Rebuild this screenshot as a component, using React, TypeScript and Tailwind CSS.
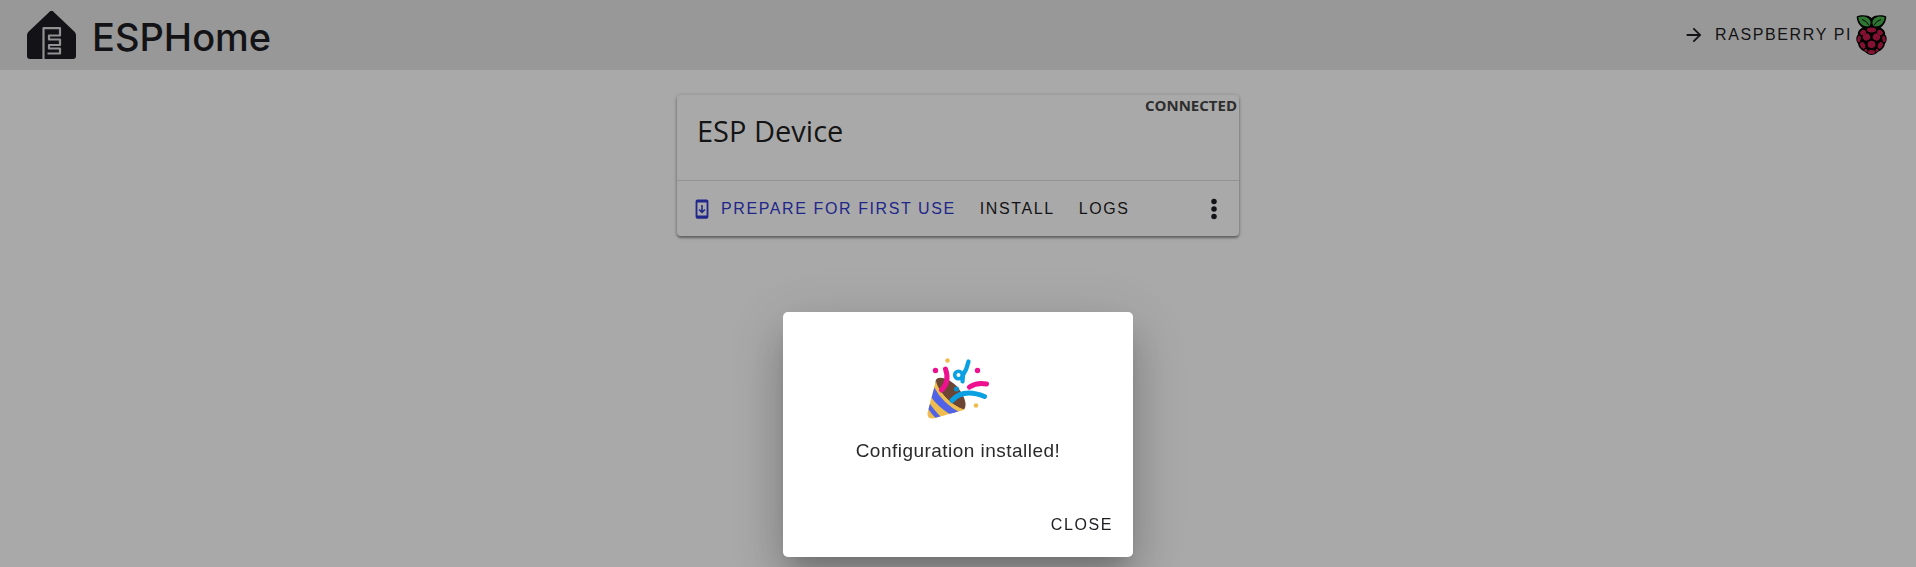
import type { ReactNode } from "react";

function EspHomeLogo() {
  return (
    <svg viewBox="0 0 49 48" className="h-12 w-[49px]" aria-hidden="true">
      <path
        d="M22.300 .9a3 3 0 0 1 4.400 0L47 20.200a5 5 0 0 1 2 3.800V45a3 3 0 0 1-3 3H3a3 3 0 0 1-3-3V24a5 5 0 0 1 2-3.800Z"
        fill="#1c1d22"
      />
      <path
        d="M16.500 48V17.200H33V24.500H22V28.500H33V34H22V37.500H33V42.500H20.500"
        fill="none"
        stroke="#d6d6d6"
        strokeWidth="2.200"
        strokeLinejoin="round"
      />
    </svg>
  );
}

function RaspberryLogo() {
  const drupelets: [number, number, number, number, number][] = [
    [15.5, 15, 4.5, 2.4, 0],
    [7, 17.5, 3, 2.5, -35],
    [24, 17.5, 3, 2.5, 35],
    [10.5, 22, 3.7, 3.5, -30],
    [20.5, 22, 3.7, 3.5, 30],
    [3, 24, 1.7, 3.3, 8],
    [28, 24, 1.7, 3.3, -8],
    [15.5, 29.3, 3.9, 3.6, 0],
    [6.7, 30.3, 2.4, 3.5, -25],
    [24.3, 30.3, 2.4, 3.5, 25],
    [15.5, 37, 3.6, 2, 0],
    [10, 35.3, 1.6, 1.3, 35],
    [21, 35.3, 1.6, 1.3, -35],
  ];
  return (
    <svg viewBox="0 0 31 40" className="h-10 w-[31px]" aria-hidden="true">
      <path
        d="M15.500 3C12-.5 4 0 .7 1.500 .8 6 3 10.500 6.500 12.500 2.500 14.500 1.500 17.500 2 19.500-.5 22 0 26.500 2 28.500 2.500 33 6 35.500 8.500 36.500 11 39 13.500 40 15.500 40S20 39 22.500 36.500C25 35.500 28.500 33 29 28.500 31 26.500 31.500 22 29 19.500 29.500 17.500 28.500 14.500 24.500 12.500 28 10.500 30.200 6 30.300 1.500 27 0 19-.5 15.500 3Z"
        fill="#000"
      />
      <path
        d="M2.200 2.300C7 .8 12.500 1.500 14.500 6.500 15 9 14 11.300 11.500 11.500 7 11.500 3 8.500 2.200 2.300ZM28.800 2.300C24 .8 18.500 1.500 16.500 6.500 16 9 17 11.300 19.500 11.500 24 11.500 28 8.500 28.800 2.300Z"
        fill="#46af4b"
      />
      <path d="M6 4.500Q11 6 12.800 10M25 4.500Q20 6 18.200 10" stroke="#000" strokeWidth=".9" fill="none" />
      {drupelets.map(([x, y, rx, ry, r]) => (
        <ellipse key={`${x}-${y}`} cx={x} cy={y} rx={rx} ry={ry} transform={`rotate(${r} ${x} ${y})`} fill="#c51a4a" />
      ))}
    </svg>
  );
}

function PartyPopper() {
  return (
    <svg viewBox="0 0 62 62" className="size-[62px]" role="img" aria-label="Party popper">
      <defs>
        <clipPath id="cone">
          <path d="M9 24C11 33 23 49 38 52.500L6 61.500Q0 62 .5 56Z" />
        </clipPath>
      </defs>
      <path d="M8.500 25C8.500 18 20 20 29 28.500 37 37 41 48 37 52.500 31 54 9 38 8.500 25Z" fill="#6d4534" />
      <g clipPath="url(#cone)">
        <rect y="20" width="42" height="42" fill="#efbd4e" />
        <g fill="none" stroke="#4f62e8" strokeWidth="4.500">
          <path d="M-1 45Q6 56 14 63" />
          <path d="M3 35Q13 50 29 58" />
          <path d="M6.500 28Q17 46 36 55.500" stroke="#efbd4e" />
          <path d="M5 31Q14 48 32 57.500" />
          <path d="M2 40Q10 54 22 61" stroke="#efbd4e" strokeWidth="3.500" />
        </g>
      </g>
      <g fill="none" strokeLinecap="round" strokeLinejoin="round" strokeWidth="5">
        <path d="M18.500 12Q23 25 14.500 33" stroke="#ee108e" />
        <path d="M42.500 30Q50 25 59.500 27" stroke="#ee108e" />
        <path d="M25 43.500Q36 31 57.500 39.500" stroke="#0aa0e2" />
        <path d="M41.500 4.500Q40 12 36 18L35.500 24.500" stroke="#0aa0e2" strokeWidth="4.200" />
        <circle cx="31.500" cy="18" r="3.800" stroke="#0aa0e2" strokeWidth="3.600" />
      </g>
      <circle cx="29.500" cy="32" r="2.600" fill="#0a8fca" />
      <g fill="#ee108e">
        <circle cx="8.500" cy="13.500" r="2.700" />
        <circle cx="50.500" cy="13.500" r="2.700" />
      </g>
      <g fill="#efbd4e">
        <circle cx="20.500" cy="3.500" r="2.300" />
        <circle cx="49" cy="48.500" r="2.300" />
      </g>
    </svg>
  );
}

function TextButton({ children, className = "" }: { children: ReactNode; className?: string }) {
  return (
    <button
      type="button"
      className={`flex h-11 items-center rounded-sm px-2.5 text-base tracking-widest whitespace-nowrap uppercase ${className}`}
    >
      {children}
    </button>
  );
}

function Header() {
  return (
    <header className="flex h-[70px] items-center justify-between bg-[#e0e0e0] pr-[29px] pl-[27px] text-[#1c1d22]">
      <a href="#" className="flex items-center gap-4">
        <EspHomeLogo />
        <span className="pt-1 font-[Inter,sans-serif] text-[38px] leading-none font-medium">ESPHome</span>
      </a>
      <a href="#raspberry-pi" className="flex items-center text-base tracking-widest uppercase">
        <svg viewBox="0 0 24 24" className="mr-2.5 size-[22px]" fill="currentColor" aria-hidden="true">
          <path d="M12 4l-1.410 1.410L16.170 11H4v2h12.170l-5.580 5.590L12 20l8-8z" />
        </svg>
        <span className="mr-1">Raspberry Pi</span>
        <RaspberryLogo />
      </a>
    </header>
  );
}

function DeviceCard() {
  return (
    <section className="relative w-[562px] rounded-sm bg-[#fafafa] shadow-[0_2px_2px_rgba(0,0,0,0.28),0_1px_4px_rgba(0,0,0,0.3)]">
      <span className="absolute top-0 right-0.5 font-['Open_Sans',sans-serif] text-[15px] leading-5 font-bold text-[#444]">
        CONNECTED
      </span>
      <h1 className="h-[85px] px-5 pt-4 font-['Open_Sans',sans-serif] text-[29px] leading-10 text-black/90">
        ESP Device
      </h1>
      <div className="flex h-14 items-center gap-1 border-t border-[#d9d9d9] pr-2.5 pl-2">
        <TextButton className="text-[#3038cc]">
          <svg viewBox="0 0 24 24" className="-ml-1 mr-2 size-[22px]" aria-hidden="true">
            <path
              d="M7 1.500h10a2 2 0 0 1 2 2v17a2 2 0 0 1-2 2H7a2 2 0 0 1-2-2v-17a2 2 0 0 1 2-2ZM7 5v14h10V5Z"
              fill="currentColor"
              fillRule="evenodd"
            />
            <path d="M12 7.500V15.500M8.800 12.500L12 15.700L15.200 12.500" fill="none" stroke="currentColor" strokeWidth="1.700" />
          </svg>
          Prepare for first use
        </TextButton>
        <TextButton>Install</TextButton>
        <TextButton>Logs</TextButton>
        <button type="button" aria-label="More options" className="ml-auto">
          <svg viewBox="0 0 24 24" className="size-[30px]" fill="currentColor" aria-hidden="true">
            <circle cx="12" cy="6" r="2.200" />
            <circle cx="12" cy="12" r="2.200" />
            <circle cx="12" cy="18" r="2.200" />
          </svg>
        </button>
      </div>
    </section>
  );
}

function InstalledDialog() {
  return (
    <div className="fixed inset-0 flex items-end justify-center bg-black/32 pb-2.5">
      <div
        role="dialog"
        aria-modal="true"
        aria-labelledby="dialog-message"
        className="flex w-[350px] flex-col rounded-[5px] bg-white shadow-[0_14px_19px_-9px_rgba(0,0,0,0.2),0_30px_48px_4px_rgba(0,0,0,0.14),0_11px_58px_10px_rgba(0,0,0,0.12)]"
      >
        <div className="flex flex-col items-center pt-[45px]">
          <PartyPopper />
          <p id="dialog-message" className="pt-5 text-[19px] leading-6 tracking-[0.025em] text-[#2a2a2a]">
            Configuration installed!
          </p>
        </div>
        <div className="flex justify-end px-2.5 pt-10 pb-2.5">
          <TextButton>Close</TextButton>
        </div>
      </div>
    </div>
  );
}

export default function App() {
  return (
    <div className="min-h-screen bg-[#fafafa] font-['Liberation_Sans',Arial,sans-serif] text-[#1c1d22]">
      <Header />
      <main className="flex justify-center pt-[25px]">
        <DeviceCard />
      </main>
      <InstalledDialog />
    </div>
  );
}
